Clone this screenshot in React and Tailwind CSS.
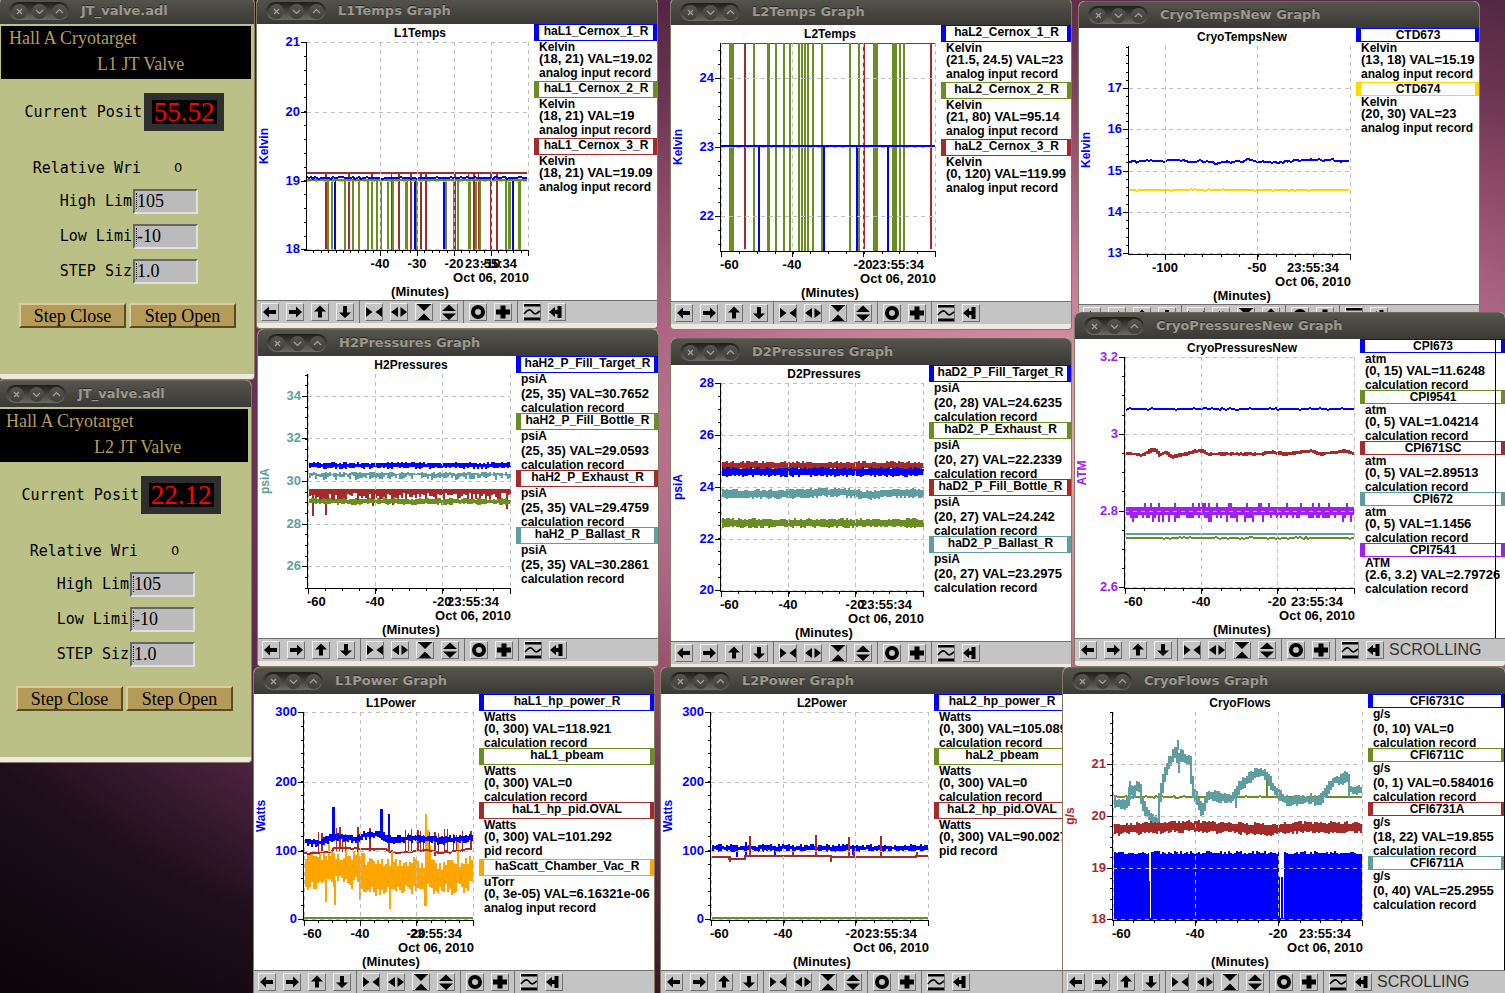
import { useId } from 'react';

const BLUE = '#0000ff';
const OLIVE = '#6b8e23';
const BROWN = '#a52a2a';
const TEAL = '#5f9ea0';
const PURPLE = '#a020f0';
const GOLD = '#ffd700';
const ORANGE = '#ffa500';

// small seeded generator so the traces look the same on every render
function random(seed) {
  let s = seed * 7919 + 17;
  return () => {
    s = (s * 16807) % 2147483647;
    return s / 2147483647;
  };
}

function at(points, x) {
  if (typeof points === 'number') return points;
  for (let i = 1; i < points.length; i++) {
    const [x0, y0] = points[i - 1];
    const [x1, y1] = points[i];
    if (x <= x1) return y0 + ((y1 - y0) * (x - x0)) / (x1 - x0);
  }
  return points[points.length - 1][1];
}

// noisy trace built from vertical strokes, each two pixels wide
function band(x0, x1, mid, up, down, seed, base = 0.5) {
  const r = random(seed);
  let d = '';
  for (let x = x0; x < x1; x += 2) {
    const y = at(mid, x);
    const next = at(mid, x + 2);
    const a = up * (base + (1 - base) * r());
    const b = down * (base + (1 - base) * r());
    d += `M${x + 1} ${Math.round(Math.min(y, next) - a)}V${Math.round(Math.max(y, next) + b)}`;
  }
  return d;
}

// thin trace with a little jitter
function line(x0, x1, mid, jitter, seed) {
  const r = random(seed);
  let d = '';
  for (let x = x0; x <= x1; x += 2) {
    const y = at(mid, x) + Math.round((r() - 0.5) * 2 * jitter);
    d += `${x === x0 ? 'M' : 'L'}${x} ${y.toFixed(1)}`;
  }
  return d;
}

function Bars({ list, color, y0, y1 }) {
  return list.map(([x, w], i) => <rect key={i} x={x} y={y0} width={w} height={y1 - y0} fill={color} />);
}

function Spikes({ list, color }) {
  return list.map(([x, y0, y1, w = 2], i) => <rect key={i} x={x} y={y0} width={w} height={y1 - y0} fill={color} />);
}

const Stroke = ({ d, color, w = 2 }) => <path d={d} stroke={color} strokeWidth={w} fill="none" />;

function L1Temps() {
  return (
    <>
      <Bars color={OLIVE} y0={180} y1={250} list={[[327, 2], [331, 2], [344, 2], [352, 2], [358, 2], [367, 2], [371, 2], [376, 2], [380, 2], [387, 2], [392, 2], [405, 3], [416, 2], [445, 2], [453, 2], [457, 2], [468, 3], [475, 2], [479, 2], [505, 2], [508, 3], [518, 3]]} />
      <Bars color={BROWN} y0={173} y1={250} list={[[325, 2], [348, 2], [391, 1], [398, 2], [410, 2], [420, 2], [425, 2], [454, 2], [473, 2], [478, 1], [490, 2], [496, 2]]} />
      <Bars color={BROWN} y0={173} y1={180} list={[[371, 2], [468, 1]]} />
      <Bars color={BLUE} y0={178} y1={250} list={[[334, 2], [414, 2], [443, 2], [512, 2]]} />
      <Stroke d={line(307, 528, 180, 0, 1)} color={OLIVE} />
      <Stroke d={line(307, 528, 178, 0.7, 2)} color={BLUE} />
      <Stroke d={line(307, 528, 173, 0.3, 3)} color={BROWN} />
    </>
  );
}

function L2Temps() {
  return (
    <>
      <rect x={721} y={43} width={214} height={1} fill={BROWN} />
      <Bars color={OLIVE} y0={43} y1={251} list={[[729, 5], [753, 2], [767, 3], [775, 2], [783, 2], [789, 2], [798, 2], [801, 2], [804, 2], [807, 2], [812, 2], [821, 2], [849, 2], [858, 2], [873, 5], [892, 5], [899, 2], [903, 2]]} />
      <Bars color={BROWN} y0={43} y1={249} list={[[744, 2], [863, 2], [930, 2]]} />
      <Bars color={BLUE} y0={146} y1={251} list={[[758, 2], [823, 2], [856, 2], [887, 2]]} />
      <Stroke d={line(721, 935, 146, 0, 4)} color={BLUE} />
    </>
  );
}

function CryoTemps() {
  const drift = [[1129, 162], [1150, 161], [1180, 160], [1190, 162], [1207, 161], [1212, 163], [1230, 162], [1250, 160], [1262, 162], [1280, 163], [1290, 161], [1320, 160], [1350, 161]];
  return (
    <>
      <Stroke d={line(1129, 1350, drift, 0.7, 5)} color={BLUE} />
      <Stroke d={line(1129, 1350, 190, 0.55, 6)} color={GOLD} />
    </>
  );
}

function H2Pressures() {
  return (
    <>
      <Stroke d={band(309, 511, 491, 2, 10, 8, 0.2)} color={BROWN} />
      <Stroke d={band(309, 511, 490, 1, 3, 9)} color={BROWN} />
      <Spikes color={BROWN} list={[[312, 490, 516], [325, 490, 515], [372, 490, 506], [392, 490, 505], [506, 490, 509]]} />
      <Stroke d={band(309, 511, 465, 3, 4, 7, 0.4)} color={BLUE} />
      <Stroke d={band(309, 511, 474, 2, 6, 10, 0.1)} color={TEAL} />
      <Stroke d={band(309, 511, 501, 3, 4, 11, 0.4)} color={OLIVE} />
    </>
  );
}

function D2Pressures() {
  return (
    <>
      <Stroke d={band(722, 923, 466, 5, 4, 12)} color={BROWN} />
      <Stroke d={band(722, 923, 472, 5, 5, 13)} color={BLUE} />
      <Stroke d={band(722, 923, [[722, 494], [790, 494], [840, 492], [870, 495], [890, 493], [923, 493]], 5, 5, 14)} color={TEAL} />
      <Stroke d={band(722, 923, 523, 5, 5, 15)} color={OLIVE} />
    </>
  );
}

function CryoPressures() {
  const drift = [[1125, 453], [1143, 455], [1154, 449], [1160, 455], [1166, 452], [1172, 457], [1190, 453], [1201, 450], [1208, 454], [1260, 454], [1272, 452], [1285, 454], [1312, 451], [1320, 454], [1337, 452], [1347, 451], [1354, 454]];
  const r = random(21);
  const up = [];
  const low = [];
  for (let x = 1126; x < 1354; x += 2) {
    if (r() < 0.16) up.push([x, 503, 508, 2]);
    const v = r();
    low.push([x, 507, v < 0.2 ? 522 : v < 0.6 ? 518 : 515, 2]);
  }
  return (
    <>
      <Stroke d={line(1126, 1354, 409, 0.6, 16)} color={BLUE} />
      <Stroke d={band(1126, 1354, drift, 2, 2, 17)} color={BROWN} />
      <Spikes list={up} color={PURPLE} />
      <Spikes list={low} color={PURPLE} />
      <Stroke d="M1126 534H1354" color={TEAL} />
      <Stroke d={line(1126, 1354, 538, 0.6, 18)} color={OLIVE} />
    </>
  );
}

function L1Power() {
  const blue = [[304, 841], [320, 843], [332, 837], [345, 837], [355, 839], [365, 835], [380, 834], [390, 839], [420, 838], [440, 840], [473, 837]];
  const brown = [[304, 853], [331, 852], [333, 848], [385, 849], [391, 851], [400, 853], [425, 850], [440, 853], [473, 849]];
  const haze = [[304, 872], [330, 868], [360, 868], [364, 876], [400, 873], [440, 877], [473, 872]];
  const r = random(33);
  const spikes = [];
  for (let x = 318; x < 470; x += 3) {
    if (r() < 0.4) spikes.push([x, 828 + Math.round(r() * 7), 852, 1]);
  }
  return (
    <>
      <Stroke d={band(305, 473, haze, 18, 22, 19, 0.35)} color={ORANGE} />
      <Stroke d={band(305, 365, 862, 10, 8, 20, 0.1)} color={ORANGE} />
      <Spikes color={ORANGE} list={[[328, 842, 870], [345, 846, 870], [357, 850, 870], [391, 851, 870], [425, 814, 906], [427, 830, 880], [429, 846, 870], [457, 842, 870], [325, 880, 902], [334, 880, 905], [359, 880, 900], [389, 880, 909], [424, 880, 906]]} />
      <Stroke d={line(304, 473, brown, 0.7, 22)} color={BROWN} />
      <Spikes list={spikes} color={BROWN} />
      <Spikes color={BROWN} list={[[321, 833, 852], [339, 827, 848], [357, 827, 848], [369, 828, 848], [388, 828, 850], [417, 830, 851], [434, 832, 856], [470, 831, 850]]} />
      <Stroke d={band(305, 473, blue, 4, 5, 23, 0.3)} color={BLUE} />
      <Spikes color={BLUE} list={[[332, 807, 840, 3], [380, 809, 838, 3], [388, 814, 840, 2]]} />
      <Stroke d="M304 918H473" color={OLIVE} />
    </>
  );
}

function L2Power() {
  return (
    <>
      <Stroke d={band(712, 928, 848, 4, 4, 24, 0.3)} color={BLUE} />
      <Spikes color={BLUE} list={[[736, 848, 857], [745, 842, 856], [774, 848, 855], [852, 848, 855]]} />
      <Stroke d="M712 857H729V859H745V856H831V857H916V856H928" color={BROWN} />
      <Spikes color={BROWN} list={[[749, 836, 856], [815, 835, 856], [848, 837, 856], [880, 836, 856], [729, 856, 862], [830, 856, 862], [792, 852, 856], [853, 852, 856], [916, 852, 856]]} />
      <Stroke d="M712 918H928" color={OLIVE} />
    </>
  );
}

function CryoFlows() {
  const teal = [[1113, 797], [1115, 803], [1125, 805], [1129, 799], [1131, 785], [1133, 797], [1136, 787], [1140, 789], [1143, 805], [1147, 812], [1153, 820], [1158, 823], [1160, 796], [1165, 774], [1170, 761], [1177, 751], [1179, 764], [1181, 752], [1186, 760], [1190, 761], [1193, 790], [1197, 799], [1202, 811], [1207, 797], [1213, 795], [1227, 799], [1233, 797], [1240, 787], [1250, 777], [1260, 772], [1267, 775], [1273, 787], [1280, 796], [1290, 802], [1300, 799], [1310, 799], [1320, 801], [1327, 790], [1335, 779], [1342, 780], [1347, 775], [1350, 789], [1362, 790]];
  return (
    <>
      <Stroke d={line(1114, 1362, 797, 0.6, 26)} color={OLIVE} />
      <Stroke d={band(1114, 1362, teal, 6, 6, 27, 0.4)} color={TEAL} />
      <Spikes color={TEAL} list={[[1177, 740, 750], [1178, 755, 773], [1129, 781, 800], [1155, 815, 830], [1235, 790, 808], [1348, 775, 797]]} />
      <Spikes color={OLIVE} list={[[1266, 780, 797]]} />
      <Stroke d={band(1114, 1362, [[1114, 829], [1160, 827], [1200, 826], [1270, 829], [1300, 827], [1362, 827]], 6, 7, 28)} color={BROWN} />
      <Stroke d={band(1114, 1362, 856, 5, 0, 29, 0.3)} color={BLUE} />
      <rect x={1114} y={856} width={248} height={64} fill={BLUE} />
      <Spikes color="#ffffff" list={[[1149, 850, 881], [1150, 850, 918, 1], [1279, 850, 877, 5], [1280, 877, 918, 1], [1283, 877, 918, 1]]} />
    </>
  );
}

const GRAPHS = [
  {
    name: 'L1Temps', x: 256, y: -3, w: 400, lx: 277, h: 276, Data: L1Temps,
    unit: 'Kelvin', color: BLUE, box: [307, 42, 528, 250],
    ys: [[21, 42], [20, 112], [19, 181], [18, 249]], yMinor: 13.85,
    xs: [[-40, 380], [-30, 417], [-20, 454], [-10, 491]], xMinor: 7.4, leftGrid: false,
    legend: [
      ['haL1_Cernox_1_R', 'Kelvin', '(18, 21) VAL=19.02', 'analog input record', BLUE],
      ['haL1_Cernox_2_R', 'Kelvin', '(18, 21) VAL=19', 'analog input record', OLIVE],
      ['haL1_Cernox_3_R', 'Kelvin', '(18, 21) VAL=19.09', 'analog input record', BROWN],
    ],
  },
  {
    name: 'L2Temps', x: 670, y: -2, w: 400, lx: 270, h: 276, Data: L2Temps,
    unit: 'Kelvin', color: BLUE, box: [721, 43, 935, 251],
    ys: [[24, 78], [23, 147], [22, 216]], yMinor: 13.8,
    xs: [[-60, 721], [-40, 792], [-20, 863]], xMinor: 17.8, leftGrid: true,
    legend: [
      ['haL2_Cernox_1_R', 'Kelvin', '(21.5, 24.5) VAL=23', 'analog input record', BLUE],
      ['haL2_Cernox_2_R', 'Kelvin', '(21, 80) VAL=95.14', 'analog input record', OLIVE],
      ['haL2_Cernox_3_R', 'Kelvin', '(0, 120) VAL=119.99', 'analog input record', BROWN],
    ],
  },
  {
    name: 'CryoTempsNew', x: 1078, y: 1, w: 400, lx: 277, h: 276, Data: CryoTemps,
    unit: 'Kelvin', color: BLUE, box: [1129, 46, 1350, 254],
    ys: [[17, 88], [16, 129], [15, 171], [14, 212], [13, 253]], yMinor: 8.25,
    xs: [[-100, 1165], [-50, 1257]], xMinor: 18.5, leftGrid: false,
    legend: [
      ['CTD673', 'Kelvin', '(13, 18) VAL=15.19', 'analog input record', BLUE],
      ['CTD674', 'Kelvin', '(20, 30) VAL=23', 'analog input record', GOLD],
    ],
  },
  {
    name: 'H2Pressures', x: 257, y: 329, w: 400, lx: 258, h: 282, Data: H2Pressures,
    unit: 'psiA', color: TEAL, box: [308, 374, 510, 588],
    ys: [[34, 396], [32, 438], [30, 481], [28, 524], [26, 566]], yMinor: 10.65,
    xs: [[-60, 308], [-40, 375], [-20, 442]], xMinor: 16.8, leftGrid: true,
    legend: [
      ['haH2_P_Fill_Target_R', 'psiA', '(25, 35) VAL=30.7652', 'calculation record', BLUE],
      ['haH2_P_Fill_Bottle_R', 'psiA', '(25, 35) VAL=29.0593', 'calculation record', OLIVE],
      ['haH2_P_Exhaust_R', 'psiA', '(25, 35) VAL=29.4759', 'calculation record', BROWN],
      ['haH2_P_Ballast_R', 'psiA', '(25, 35) VAL=30.2861', 'calculation record', TEAL],
    ],
  },
  {
    name: 'D2Pressures', x: 670, y: 338, w: 400, lx: 258, h: 276, Data: D2Pressures,
    unit: 'psiA', color: BLUE, box: [721, 383, 923, 591],
    ys: [[28, 383], [26, 435], [24, 487], [22, 539], [20, 590]], yMinor: 12.95,
    xs: [[-60, 721], [-40, 788], [-20, 855]], xMinor: 16.8, leftGrid: true,
    legend: [
      ['haD2_P_Fill_Target_R', 'psiA', '(20, 28) VAL=24.6235', 'calculation record', BLUE],
      ['haD2_P_Exhaust_R', 'psiA', '(20, 27) VAL=22.2339', 'calculation record', OLIVE],
      ['haD2_P_Fill_Bottle_R', 'psiA', '(20, 27) VAL=24.242', 'calculation record', BROWN],
      ['haD2_P_Ballast_R', 'psiA', '(20, 27) VAL=23.2975', 'calculation record', TEAL],
    ],
  },
  {
    name: 'CryoPressuresNew', x: 1074, y: 312, w: 430, lx: 285, h: 299, Data: CryoPressures,
    unit: 'ATM', color: PURPLE, box: [1125, 357, 1354, 588], scrolling: true, edge: 9,
    ys: [['3.2', 357], ['3', 434], ['2.8', 511], ['2.6', 587]], yMinor: 19.2,
    xs: [[-60, 1125], [-40, 1201], [-20, 1277]], xMinor: 19.05, leftGrid: true,
    legend: [
      ['CPI673', 'atm', '(0, 15) VAL=11.6248', 'calculation record', BLUE],
      ['CPI9541', 'atm', '(0, 5) VAL=1.04214', 'calculation record', OLIVE],
      ['CPI671SC', 'atm', '(0, 5) VAL=2.89513', 'calculation record', BROWN],
      ['CPI672', 'atm', '(0, 5) VAL=1.1456', 'calculation record', TEAL],
      ['CPI7541', 'ATM', '(2.6, 3.2) VAL=2.79726', 'calculation record', PURPLE],
    ],
  },
  {
    name: 'L1Power', x: 253, y: 667, w: 400, lx: 225, h: 276, Data: L1Power,
    unit: 'Watts', color: BLUE, box: [304, 712, 473, 920],
    ys: [[300, 712], [200, 782], [100, 851], [0, 919]], yMinor: 13.8,
    xs: [[-60, 304], [-40, 360], [-20, 416]], xMinor: 14.1, leftGrid: true,
    legend: [
      ['haL1_hp_power_R', 'Watts', '(0, 300) VAL=118.921', 'calculation record', BLUE],
      ['haL1_pbeam', 'Watts', '(0, 300) VAL=0', 'calculation record', OLIVE],
      ['haL1_hp_pid.OVAL', 'Watts', '(0, 300) VAL=101.292', 'pid record', BROWN],
      ['haScatt_Chamber_Vac_R', 'uTorr', '(0, 3e-05) VAL=6.16321e-06', 'analog input record', ORANGE],
    ],
  },
  {
    name: 'L2Power', x: 660, y: 667, w: 408, lx: 273, h: 276, Data: L2Power,
    unit: 'Watts', color: BLUE, box: [711, 712, 928, 920],
    ys: [[300, 712], [200, 782], [100, 851], [0, 919]], yMinor: 13.8,
    xs: [[-60, 711], [-40, 783], [-20, 855]], xMinor: 18.05, leftGrid: true,
    legend: [
      ['haL2_hp_power_R', 'Watts', '(0, 300) VAL=105.089', 'calculation record', BLUE],
      ['haL2_pbeam', 'Watts', '(0, 300) VAL=0', 'calculation record', OLIVE],
      ['haL2_hp_pid.OVAL', 'Watts', '(0, 300) VAL=90.0027', 'pid record', BROWN],
    ],
  },
  {
    name: 'CryoFlows', x: 1062, y: 667, w: 442, lx: 305, h: 276, Data: CryoFlows,
    unit: 'g/s', color: BROWN, box: [1113, 712, 1362, 920], scrolling: true, edge: 0,
    ys: [[21, 764], [20, 816], [19, 868], [18, 919]], yMinor: 10.36,
    xs: [[-60, 1113], [-40, 1195], [-20, 1278]], xMinor: 20.8, leftGrid: true,
    legend: [
      ['CFI6731C', 'g/s', '(0, 10) VAL=0', 'calculation record', BLUE],
      ['CFI6711C', 'g/s', '(0, 1) VAL=0.584016', 'calculation record', OLIVE],
      ['CFI6731A', 'g/s', '(18, 22) VAL=19.855', 'calculation record', BROWN],
      ['CFI6711A', 'g/s', '(0, 40) VAL=25.2955', 'calculation record', TEAL],
    ],
  },
];

function TitleBar({ title }) {
  const marks = ['M5 5l5 5M10 5l-5 5', 'M4 6l3.500 3.500L11 6', 'M4 9l3.500-3.500L11 9'];
  return (
    <div className="flex h-[27px] items-center rounded-t-[6px] border-t border-[#6d6558] bg-linear-to-b from-[#55544d] to-[#3a3935] pl-[9px]">
      <div className="flex h-[18px] w-[60px] items-center justify-center gap-[5px] rounded-full bg-linear-to-b from-[#1f1e1b] to-[#6b6a64]">
        {['Close', 'Minimize', 'Maximize'].map((name, i) => (
          <button key={name} aria-label={name} className="size-[15px] rounded-full bg-linear-to-b from-[#55544e] to-[#3f3e39]">
            <svg viewBox="0 0 15 15" className="size-[15px]" fill="none" stroke="#a5a399" strokeWidth="1.200">
              <path d={marks[i]} />
            </svg>
          </button>
        ))}
      </div>
      <h2 className="ml-[12px] whitespace-nowrap font-['DejaVu_Sans'] text-[13px] leading-[16px] font-bold text-[#9b988e] [text-shadow:0_-1px_0_#2a2926]">{title}</h2>
    </div>
  );
}

function Frame({ x, y, title, children }) {
  return (
    <section className="absolute overflow-hidden rounded-t-[6px] rounded-b-[4px] border-x border-b border-[#85795f] bg-[#ede8e0] pb-[5px]" style={{ left: x, top: y }}>
      <TitleBar title={title} />
      {children}
    </section>
  );
}

// glyphs are drawn on the 18px face of the tool button
const TOOLS = [
  [
    ['Scroll left', <path d="M2 9L8 3.500V7H15V11H8V14.500Z" />],
    ['Scroll right', <path d="M16 9L10 3.500V7H3V11H10V14.500Z" />],
    ['Scroll up', <path d="M9 2.500L15 8.500H11V14.500H7V8.500H3Z" />],
    ['Scroll down', <path d="M9 15L15 9.500H11V3H7V9.500H3Z" />],
  ],
  [
    ['Compress x', <path d="M1 4L7.500 9L1 14ZM17 4L10.500 9L17 14Z" />],
    ['Expand x', <path d="M8 4L1 9L8 14ZM10.500 4L17 9L10.500 14Z" />],
    ['Compress y', <path d="M2 1H16V2H15L9 8L3 2H2ZM9 10.500L15 16.500V17H3V16.500Z" />],
    ['Expand y', <path d="M2 8L9 1.500L16 8ZM2 10.500L9 17L16 10.500Z" />],
  ],
  [
    ['Reset', <circle cx="9" cy="9" r="5" fill="none" stroke="#000" strokeWidth="4" />],
    ['Center', <path d="M6.500 2.500H11.500V6.500H16V11.500H11.500V15.500H6.500V11.500H2V6.500H6.500Z" />],
  ],
  [
    ['Autoscale', <g><path d="M1 1H17V3.500H1ZM1 14.500H17V17H1Z" /><path d="M1 11C3.500 8 5.500 5.500 8 7.500S11 12 13.500 10.500L17 8" fill="none" stroke="#000" strokeWidth="1.600" /></g>],
    ['Jump to end', <path d="M1 9L7 4V7H9.500V3H13.500V15H9.500V11H7V14Z" />],
  ],
];

function Toolbar({ scrolling }) {
  return (
    <div className="flex h-[23px] items-stretch border-t border-[#707070] bg-[#c4c4c4]">
      {TOOLS.map((group, i) => (
        <div key={i} className={`flex items-center gap-[7px] border-[#707070] px-[5px] first:pl-[4px] ${i < 3 ? 'border-r' : ''}`}>
          {group.map(([name, icon]) => (
            <button key={name} aria-label={name} className="size-[18px] border border-t-[#f0f0f0] border-l-[#f0f0f0] border-r-[#707070] border-b-[#707070]">
              <svg viewBox="1 1 16 16" className="size-[16px] overflow-visible">{icon}</svg>
            </button>
          ))}
        </div>
      ))}
      {scrolling && <span className="text-[16px] leading-[21px] text-[#333333]">SCROLLING</span>}
    </div>
  );
}

function LegendItem({ item }) {
  const [name, unit, value, record, color] = item;
  return (
    <li>
      <div
        className={`${name.includes('_') ? 'h-[17px]' : 'h-[14px]'} flex justify-center border-y border-r-4 border-l-[5px] text-[12px] leading-[12px] whitespace-nowrap`}
        style={{ borderColor: color }}
      >
        {name}
      </div>
      <div className="pl-[5px] leading-[14px] whitespace-nowrap">
        <div className={`${/[pg]/.test(unit) ? 'h-[14px]' : 'h-[11px]'} text-[12px] leading-[12px]`}>{unit}</div>
        <div className="h-[14px] text-[13px]">{value}</div>
        <div className={`${/[pg]/.test(record) ? 'h-[15px]' : 'h-[12px]'} text-[12px]`}>{record}</div>
      </div>
    </li>
  );
}

// steps outwards from an anchor tick until the axis ends
function minorTicks(anchor, step, lo, hi) {
  const out = [];
  for (let v = anchor; v >= lo - 0.5; v -= step) out.push(Math.round(v));
  for (let v = anchor + step; v <= hi + 0.5; v += step) out.push(Math.round(v));
  return out;
}

function Chart({ g }) {
  const [l, t, r, b] = g.box;
  const oy = g.y + 27;
  const mid = Math.round((l + r) / 2) + 2;
  const grid = { stroke: '#bebebe', strokeWidth: 1, strokeDasharray: '4 4' };
  return (
    <svg width={g.lx} height={g.h} viewBox={`${g.x + 1} ${oy} ${g.lx} ${g.h}`} className="shrink-0" shapeRendering="crispEdges" role="img" aria-label={g.name}>
      <g.Data />
      {g.ys.map(([v, y]) => <path key={v} d={`M${l} ${y + 0.5}H${r}`} {...grid} />)}
      {g.xs.filter(([, x]) => x !== l || g.leftGrid).map(([v, x]) => <path key={v} d={`M${x + 0.5} ${t}V${b}`} {...grid} />)}
      <path d={`M${r + 0.5} ${t}V${b}`} {...grid} />
      <g stroke="#000">
        <path d={`M${l - 0.5} ${t}V${b + 0.5}M${l - 1} ${b + 0.5}H${r + 1}M${r + 0.5} ${b}V${b + 6}`} />
        {g.ys.map(([v, y]) => <path key={v} d={`M${l - 6} ${y + 0.5}H${l}`} />)}
        {g.xs.map(([v, x]) => <path key={v} d={`M${x + 0.5} ${b}V${b + 6}`} />)}
        {minorTicks(g.ys[0][1], g.yMinor, t, b).map((y) => <path key={y} d={`M${l - 3} ${y + 0.5}H${l}`} />)}
        {minorTicks(r, g.xMinor, l, r).map((x) => <path key={x} d={`M${x + 0.5} ${b}V${b + 3}`} />)}
      </g>
      <g className="text-[12px] font-bold">
        <text x={mid} y={oy + 13} textAnchor="middle">{g.name}</text>
        <text transform={`translate(${g.x + 12} ${Math.round((t + b) / 2)}) rotate(-90)`} textAnchor="middle" fill={g.color}>{g.unit}</text>
      </g>
      <g className="text-[13px] font-bold">
        {g.ys.map(([v, y]) => <text key={v} x={l - 7} y={y + 4} textAnchor="end" fill={g.color}>{v}</text>)}
        {g.xs.map(([v, x]) => <text key={v} x={x === l ? l - 1 : x} y={b + 18} textAnchor={x === l ? 'start' : 'middle'}>{v}</text>)}
        <text x={r - 37} y={b + 18} textAnchor="middle">23:55:34</text>
        <text x={r + 1} y={b + 32} textAnchor="end">Oct 06, 2010</text>
        <text x={mid} y={b + 46} textAnchor="middle">(Minutes)</text>
      </g>
    </svg>
  );
}

function GraphWindow({ g }) {
  return (
    <Frame x={g.x} y={g.y} title={`${g.name} Graph`}>
      <div className="relative flex bg-white font-bold text-black" style={{ width: g.w }}>
        <Chart g={g} />
        <ul className="min-w-0 flex-1">
          {g.legend.map((item) => <LegendItem key={item[0]} item={item} />)}
        </ul>
        {g.edge !== undefined && <div className="absolute inset-y-0 w-px bg-black" style={{ right: g.edge }} />}
      </div>
      <Toolbar scrolling={g.scrolling} />
    </Frame>
  );
}

function Field({ label, value }) {
  const id = useId();
  return (
    <div className="flex h-[25px] items-center">
      <label htmlFor={id} className="w-[133px] pr-px text-right">{label}</label>
      <div className="relative">
        <input id={id} defaultValue={value} className="block h-[25px] w-[65px] border-2 border-t-[#666666] border-l-[#666666] border-r-[#e0e0e0] border-b-[#e0e0e0] bg-[#bbbbbb] pl-[2px] font-['Liberation_Serif'] text-[18px] leading-[20px] outline-none" />
        <span className="absolute top-[4px] left-[3px] h-[16px] border-l border-dotted border-black" />
      </div>
    </div>
  );
}

function StepButton({ children }) {
  return (
    <button className="h-[25px] w-[107px] border-2 border-t-[#dccb9f] border-l-[#dccb9f] border-r-[#5b4a22] border-b-[#5b4a22] bg-[#b59b5a] font-['Liberation_Serif'] text-[18px] leading-[20px]">
      {children}
    </button>
  );
}

function ValveWindow({ x, y, valve, position }) {
  return (
    <Frame x={x} y={y} title="JT_valve.adl">
      <div className="h-[350px] w-[254px] bg-[#bbc087] pt-[2px] font-['DejaVu_Sans_Mono'] text-[15px] text-black">
        <div className="ml-px h-[53px] w-[250px] bg-black font-['Liberation_Serif'] text-[18px] text-[#b59b5a]">
          <p className="pl-[8px] leading-[24px]">Hall A Cryotarget</p>
          <p className="pl-[96px] leading-[28px]">{valve} JT Valve</p>
        </div>
        <div className="mt-[14px] flex items-center">
          <span className="w-[144px] pr-[2px] text-right">Current Posit</span>
          <output className="flex h-[38px] w-[80px] items-center justify-center bg-[#2e2e2e]">
            <span className="h-[24px] w-[65px] bg-black text-center font-['Liberation_Serif'] text-[27px] leading-[24px] text-[#ff0000]">{position}</span>
          </output>
        </div>
        <div className="mt-[25px] flex h-[24px] items-center">
          <span className="w-[141px] text-right">Relative Wri</span>
          <span className="pl-[33px] font-['DejaVu_Sans'] text-[13px]">0</span>
        </div>
        <div className="mt-[9px] flex flex-col gap-[10px]">
          <Field label="High Lim" value="105" />
          <Field label="Low Limi" value="-10" />
          <Field label="STEP Siz" value="1.0" />
        </div>
        <div className="mt-[19px] flex gap-[3px] pl-[19px]">
          <StepButton>Step Close</StepButton>
          <StepButton>Step Open</StepButton>
        </div>
      </div>
    </Frame>
  );
}

export default function App() {
  return (
    <main className="relative h-screen w-full overflow-hidden bg-[radial-gradient(ellipse_at_1090px_450px,#eaa5ae_0px,#c47b98_350px,#8f4a68_660px,#6b3553_820px,#4a223e_1060px,#1e0e1b_1260px,#0a0508_1540px)] font-['Liberation_Sans',sans-serif]">
      <ValveWindow x={-1} y={-3} valve="L1" position="55.52" />
      <ValveWindow x={-4} y={380} valve="L2" position="22.12" />
      {GRAPHS.map((g) => <GraphWindow key={g.name} g={g} />)}
    </main>
  );
}
